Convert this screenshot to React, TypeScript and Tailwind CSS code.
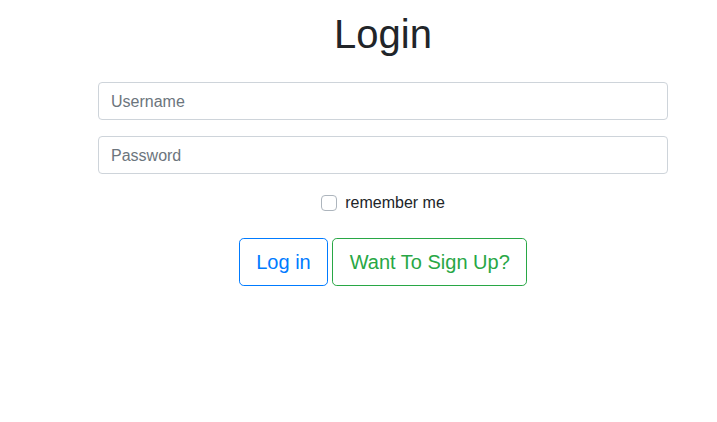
import React from "react";

export default function App() {
  return (
    <div className="min-h-[422px] w-[717px] bg-white" style={{ fontFamily: '"Liberation Sans", Arial, sans-serif' }}>
      <div className="ml-[98px] w-[570px] pt-[10px]">
        <h1 className="text-center text-[40px] leading-[48px] font-normal text-[#212529]">Login</h1>
        <div className="mt-[24px] flex flex-col gap-4">
          <input
            placeholder="Username"
            className="h-[38px] w-full rounded-[4px] border border-[#ced4da] px-3 pt-[2px] text-[16px] text-[#495057] placeholder:text-[#6c757d] outline-none"
          />
          <input
            placeholder="Password"
            type="password"
            className="h-[38px] w-full rounded-[4px] border border-[#ced4da] px-3 pt-[2px] text-[16px] text-[#495057] placeholder:text-[#6c757d] outline-none"
          />
        </div>
        <div className="mt-[17px] flex items-center justify-center h-[24px]">
          <span className="inline-block h-[16px] w-[16px] rounded-[4px] border border-[#adb5bd] bg-white" />
          <span className="ml-[8px] text-[16px] leading-[24px] text-[#212529]">remember me</span>
        </div>
        <div className="mt-[23px] flex justify-center gap-[4px]">
          <button className="h-[48px] rounded-[4.8px] border border-[#007bff] px-[16.5px] text-[20px] text-[#007bff] bg-white">
            Log in
          </button>
          <button className="h-[48px] rounded-[4.8px] border border-[#28a745] px-[16.5px] text-[20px] text-[#28a745] bg-white">
            Want To Sign Up?
          </button>
        </div>
      </div>
    </div>
  );
}
